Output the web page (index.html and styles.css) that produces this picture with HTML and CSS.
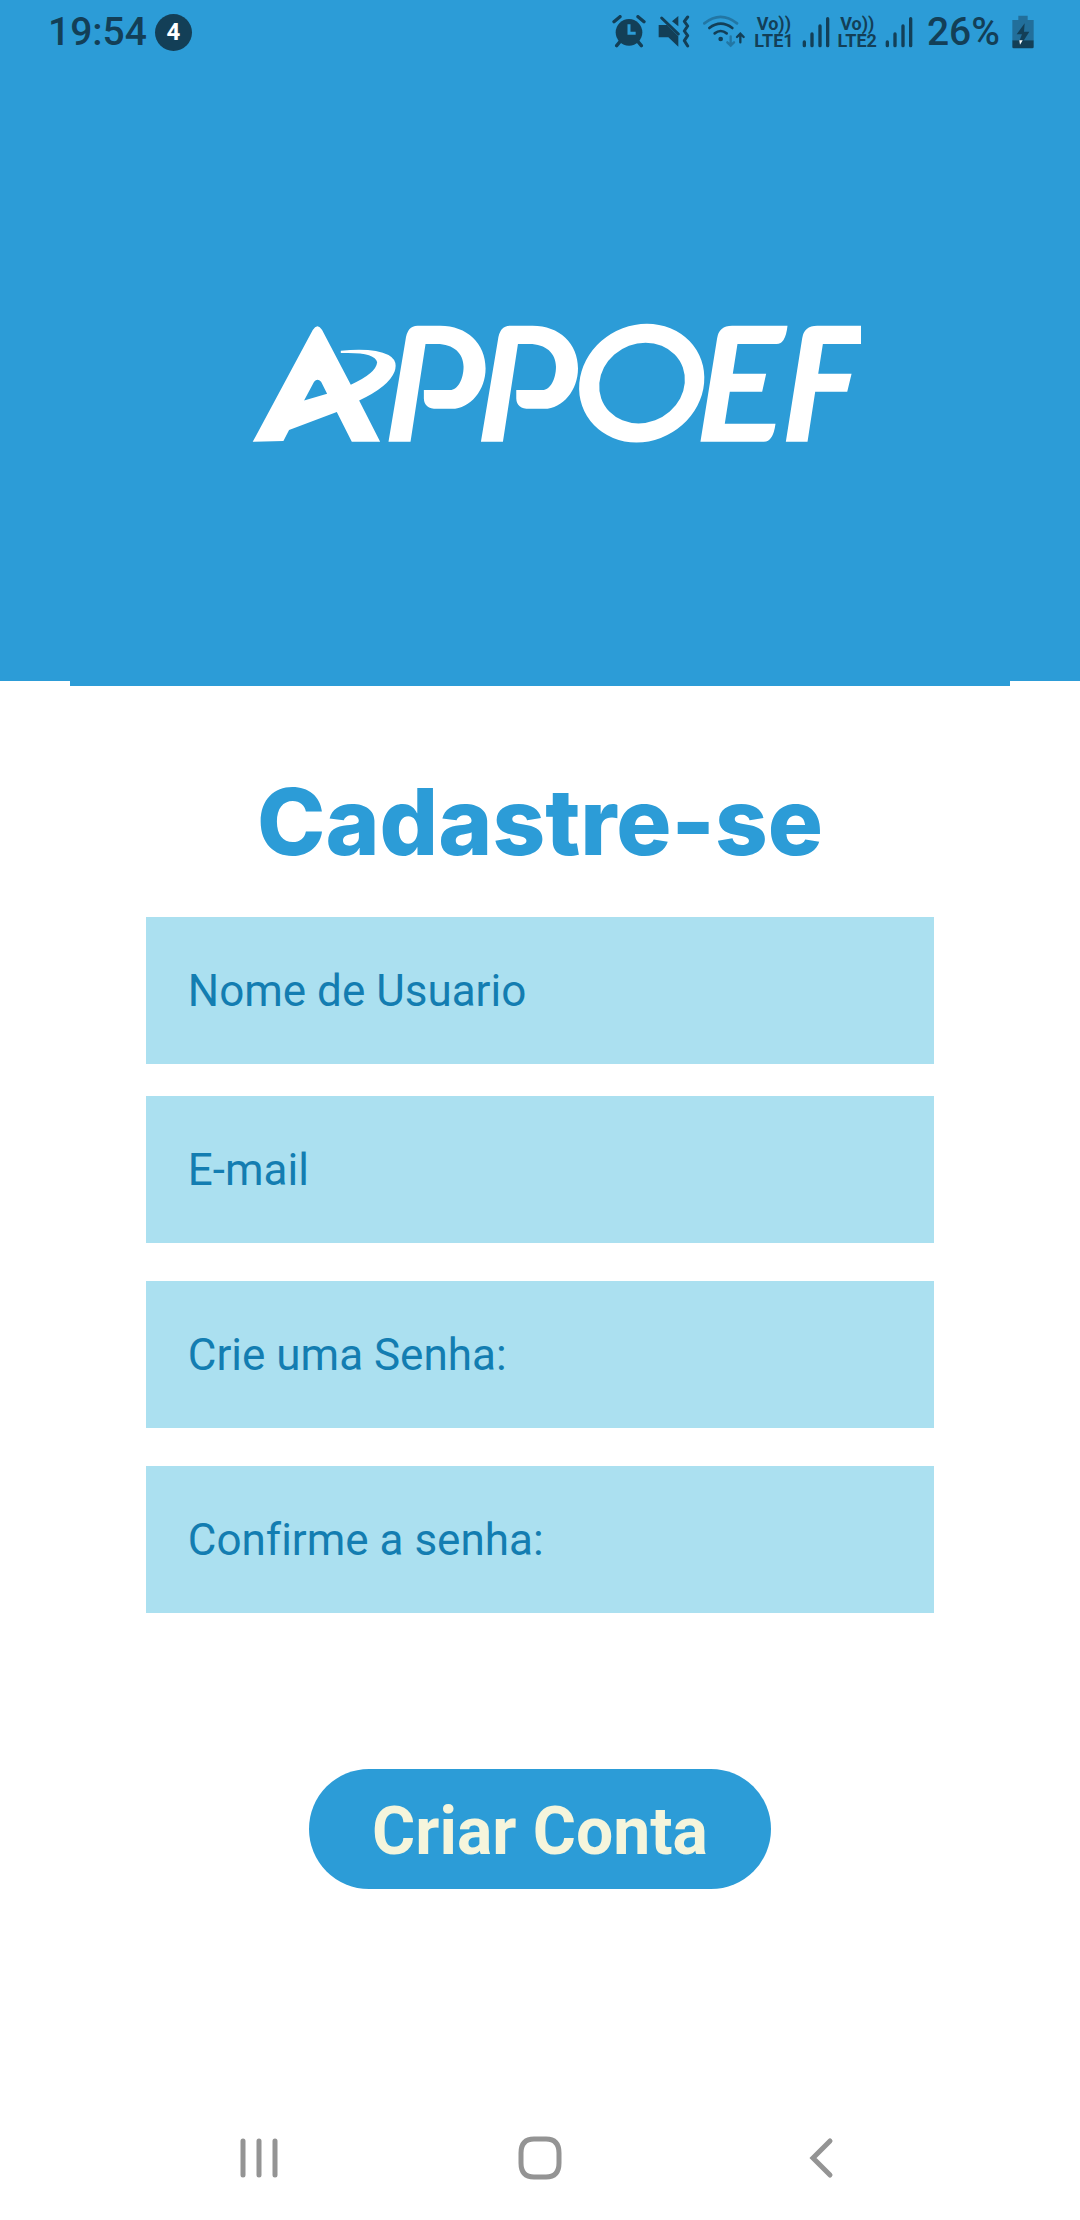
FILE: index.html
```html
<!DOCTYPE html>
<html lang="pt-BR">
<head>
<meta charset="utf-8">
<meta name="viewport" content="width=device-width, initial-scale=1">
<title>APPOEF - Cadastre-se</title>
<link rel="stylesheet" href="styles.css">
</head>
<body>
<header class="hero">
  <div class="status">
    <div class="status-group">
      <span class="clock">19:54</span>
      <span class="count">4</span>
    </div>
    <div class="status-group status-icons">
      <svg class="icon" width="34" height="34" viewBox="42 42 102 102" aria-hidden="true">
        <circle cx="93" cy="94" r="40" fill="currentColor"/>
        <path d="M48 62L66 47M138 62L120 47M66 122L56 134M120 122L130 134" stroke="currentColor" stroke-width="10" stroke-linecap="round"/>
        <path d="M93 70V97H113" fill="none" stroke="#2c9cd7" stroke-width="9"/>
      </svg>
      <svg class="icon" width="32" height="34" viewBox="179 42 96 102" aria-hidden="true">
        <path d="M181 72H206L240 106V137L210 109H181ZM240 45V76L221 61Z" fill="currentColor"/>
        <path d="M190 51L240 99" stroke="currentColor" stroke-width="9" stroke-linecap="round"/>
        <path d="M268 48L258 61L268 75L258 90L268 104L258 119L268 135" fill="none" stroke="currentColor" stroke-width="9" stroke-linecap="round" stroke-linejoin="round"/>
      </svg>
      <div class="network">
        <svg class="icon" width="44" height="34" viewBox="308 40 132 102" aria-hidden="true">
          <g fill="none" stroke="currentColor" stroke-width="8" stroke-linecap="round">
            <path d="M315 65Q364 26 413 65" opacity=".4"/>
            <path d="M330 79Q364 53 399 79M346 95Q364 81 382 95"/>
            <path d="M394 104V132M384 122L394 132L404 122" stroke-width="7" opacity=".4"/>
            <path d="M423 122V96M413 106L423 96L433 106" stroke-width="7"/>
          </g>
          <circle cx="364" cy="112" r="7" fill="currentColor"/>
        </svg>
        <span class="volte"><span>Vo))</span><span>LTE1</span></span>
        <svg class="icon" width="28" height="32" viewBox="601 42 84 96" aria-hidden="true"><path d="M608 120V131M631 96V131M655 72V131M678 50V131" stroke="currentColor" stroke-width="10" stroke-linecap="round"/></svg>
        <span class="volte"><span>Vo))</span><span>LTE2</span></span>
        <svg class="icon" width="28" height="32" viewBox="601 42 84 96" aria-hidden="true"><path d="M608 120V131M631 96V131M655 72V131M678 50V131" stroke="currentColor" stroke-width="10" stroke-linecap="round"/></svg>
      </div>
      <span class="percent">26%</span>
      <svg class="icon" width="22" height="34" viewBox="575 41 66 102" aria-hidden="true">
        <path d="M594 43H622V56H640V117H576V56H594Z" fill="#226f9b"/>
        <path d="M576 117H640V137Q640 141 636 141H580Q576 141 576 137Z" fill="currentColor"/>
        <path d="M613 66L589 99H605L598 117L603 129L627 91H611Z" fill="currentColor"/>
        <path d="M597 117H607L599 130Z" fill="#fff"/>
      </svg>
    </div>
  </div>
  <svg class="logo" viewBox="-63 30 1926 375" role="img" aria-label="APPOEF" fill="#fff">
    <path fill-rule="evenodd" d="M38 395L218 60Q232 38 246 60L332 224Q408 190 411 157Q405 125 302 129V122Q400 112 445 135Q475 152 463 185Q445 230 357 271L420 395H335L290 306L147 360L130 393ZM192 271L222 215Q232 203 243 215L261 251Z"/>
    <path id="logo-p" d="M445 395L496 90Q501 47 532 47H600C680 47 736 100 736 175C736 240 690 296 635 296H590Q552 296 551 265V240H630C652 240 670 208 670 170C670 130 640 102 590 102H556L511 395Z"/>
    <use href="#logo-p" x="277"/>
    <g transform="translate(930 0)">
      <path fill-rule="evenodd" transform="translate(274 219) skewX(-5)" d="M-187 0A187 178 0 1 1 187 0A187 178 0 1 1 -187 0ZM-127 0A128 121 0 1 0 129 0A128 121 0 1 0 -127 0Z"/>
      <path d="M450 395L500 85Q505 47 545 47H711Q705 102 678 102H561L547 191H647L635 245H538L523 341H675Q668 395 640 395Z"/>
      <path d="M706 395L755 85Q760 47 800 47H933V102H817L803 191H903L890 245H794L771 395Z"/>
    </g>
  </svg>
</header>
<main class="content">
  <h1 class="title">Cadastre-se</h1>
  <form class="form">
    <input class="field" type="text" aria-label="Nome de Usuario" placeholder="Nome de Usuario">
    <input class="field" type="email" aria-label="E-mail" placeholder="E-mail">
    <input class="field field-password" type="password" aria-label="Crie uma Senha" placeholder="Crie uma Senha:">
    <input class="field field-password" type="password" aria-label="Confirme a senha" placeholder="Confirme a senha:">
    <button class="submit" type="button">Criar Conta</button>
  </form>
</main>
<nav class="navbar" aria-label="Sistema">
  <button class="nav-button" type="button" aria-label="Recentes">
    <svg class="icon" width="44" height="44" viewBox="0 0 44 44"><path d="M6 5V39M22 5V39M38 5V39" stroke="currentColor" stroke-width="5" stroke-linecap="round"/></svg>
  </button>
  <button class="nav-button" type="button" aria-label="Início">
    <svg class="icon" width="44" height="44" viewBox="0 0 44 44"><path d="M16 3H28Q41 3 41 17V27Q41 41 28 41H16Q3 41 3 27V17Q3 3 16 3Z" fill="none" stroke="currentColor" stroke-width="5"/></svg>
  </button>
  <button class="nav-button" type="button" aria-label="Voltar">
    <svg class="icon" width="44" height="44" viewBox="0 0 44 44"><path d="M31 5L14 22L31 39" fill="none" stroke="currentColor" stroke-width="5" stroke-linecap="round"/></svg>
  </button>
</nav>
</body>
</html>
```
FILE: styles.css
```css
* {
  box-sizing: border-box;
}

body {
  margin: 0;
  min-height: 100vh;
  display: flex;
  flex-direction: column;
  background: #fff;
  font-family: Roboto, "Liberation Sans", sans-serif;
}

.icon {
  display: block;
  flex: none;
}

.hero {
  display: flex;
  flex-direction: column;
  align-items: center;
  padding: 0 0 236px;
  background: #2c9cd7;
}

.status {
  align-self: stretch;
  display: flex;
  justify-content: space-between;
  height: 64px;
  padding: 0 46px 0 48px;
  color: #133f57;
}

.status-group {
  display: flex;
  align-items: center;
  gap: 8px;
}

.status-icons {
  gap: 12px;
}

.clock,
.percent {
  font-size: 39px;
  line-height: 48px;
  font-weight: 500;
}

.percent {
  margin-left: 2px;
}

.count {
  width: 37px;
  height: 37px;
  border-radius: 50%;
  background: #133f57;
  color: #fff;
  font-size: 24px;
  line-height: 37px;
  font-weight: 700;
  text-align: center;
}

.network {
  display: flex;
  align-items: center;
  gap: 8px;
}

.volte {
  display: flex;
  flex-direction: column;
  align-items: center;
  font-size: 18px;
  line-height: 17px;
  font-weight: 700;
}

.logo {
  display: block;
  width: 59.5%;
  margin-top: 256px;
}

.content {
  flex: 1;
  display: flex;
  flex-direction: column;
  align-items: center;
}

.content::before {
  content: "";
  width: 87%;
  height: 5px;
  background: #2c9cd7;
}

.title {
  margin: 80px 0 40px;
  color: #2c9cd7;
  font-family: Inter, sans-serif;
  font-size: 92px;
  line-height: 111px;
  font-weight: 800;
}

.form {
  width: 73%;
  display: flex;
  flex-direction: column;
  gap: 32px;
}

.field {
  width: 100%;
  height: 147px;
  padding: 0 42px;
  border: 0;
  border-radius: 0;
  background: #abe0f0;
  color: #137db1;
  font-family: inherit;
  font-size: 44px;
  font-variant-ligatures: none;
}

.field::placeholder {
  color: #137db1;
  opacity: 1;
}

.field-password {
  margin-top: 6px;
}

.submit {
  align-self: center;
  height: 120px;
  margin-top: 124px;
  padding: 4px 63px 0;
  border: 0;
  border-radius: 60px;
  background: #2c9cd7;
  color: #f5f5dc;
  font-family: inherit;
  font-size: 66px;
  font-weight: 700;
}

.navbar {
  display: flex;
  justify-content: center;
  padding: 0 11% 40px;
}

.nav-button {
  flex: 1;
  display: flex;
  justify-content: center;
  padding: 0;
  border: 0;
  background: none;
  color: #949494;
}
```
